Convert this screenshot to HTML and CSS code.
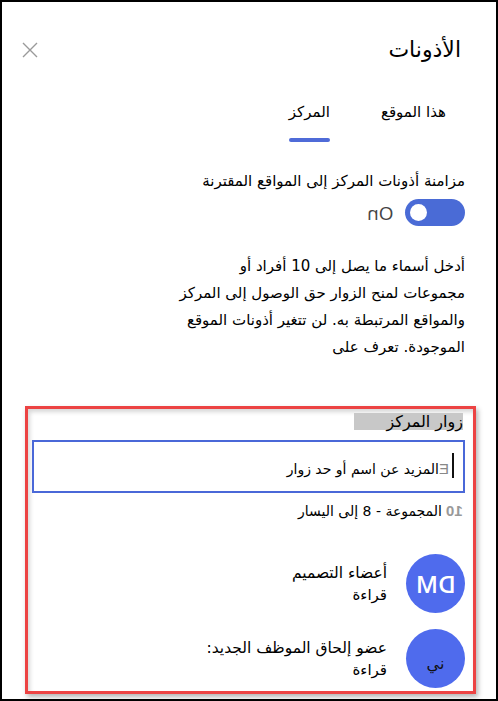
FILE: index.html
```html
<!DOCTYPE html>
<html lang="ar" dir="rtl">
<head>
<meta charset="utf-8">
<title>الأذونات</title>
<link rel="stylesheet" href="styles.css">
</head>
<body>
<div class="frame">
  <header class="head">
    <h1 class="title">الأذونات</h1>
    <button class="close" aria-label="إغلاق">
      <svg width="16" height="16" viewBox="0 0 16 16"><path d="M1 1 L15 15 M15 1 L1 15" stroke="#9a9a9a" stroke-width="1.4" fill="none"/></svg>
    </button>
  </header>
  <nav class="tabs">
    <span class="tab">هذا الموقع</span>
    <span class="tab active">المركز</span>
  </nav>
  <div class="sync">
    <div class="sync-label">مزامنة أذونات المركز إلى المواقع المقترنة</div>
    <div class="toggle-row">
      <span class="switch"><span class="knob"></span></span>
      <span class="on mirror">On</span>
    </div>
  </div>
  <p class="desc">أدخل أسماء ما يصل إلى 10 أفراد أو<br>مجموعات لمنح الزوار حق الوصول إلى المركز<br>والمواقع المرتبطة به. لن تتغير أذونات الموقع<br>الموجودة. تعرف على</p>
  <section class="visitors">
    <div class="vis-label"><span class="vis-text">زوار المركز</span></div>
    <div class="input">
      <span class="caret"></span>
      <span class="e-glyph mirror">E</span>
      <span class="ph">المزيد عن اسم أو حد زوار</span>
    </div>
    <div class="count"><span class="num mirror">10</span> المجموعة - 8 إلى اليسار</div>
    <ul class="members">
      <li class="member">
        <span class="avatar"><span class="initials mirror">DM</span></span>
        <div class="info">
          <div class="name">أعضاء التصميم</div>
          <div class="role">قراءة</div>
        </div>
      </li>
      <li class="member">
        <span class="avatar alt"><span class="initials-ar">ني</span></span>
        <div class="info">
          <div class="name">عضو إلحاق الموظف الجديد:</div>
          <div class="role">قراءة</div>
        </div>
      </li>
    </ul>
  </section>
</div>
</body>
</html>
```
FILE: styles.css
```css
* { box-sizing: border-box; }
html, body { margin: 0; padding: 0; background: #fff; }
body {
  font-family: "DejaVu Sans", "Noto Sans", sans-serif;
  color: #000;
}
.frame {
  width: 498px;
  height: 701px;
  border: 2px solid #000;
  overflow: hidden;
}
.mirror { display: inline-block; transform: scaleX(-1); }

.head {
  display: flex;
  align-items: center;
  padding: 34px 35px 0 20px;
}
.title {
  margin: 0;
  font-size: 22px;
  line-height: 28px;
  font-weight: normal;
}
.close {
  margin-right: auto;
  border: 0;
  background: none;
  padding: 0;
  width: 16px;
  height: 16px;
  display: flex;
}

.tabs {
  display: flex;
  gap: 51px;
  padding-right: 50px;
  margin-top: 36px;
}
.tab {
  position: relative;
  font-size: 15px;
  line-height: 24px;
  padding-bottom: 18px;
}
.tab.active::after {
  content: "";
  position: absolute;
  left: 0;
  right: 0;
  bottom: 0;
  height: 4px;
  border-radius: 2px;
  background: #4f6bd8;
}

.sync { padding-right: 31px; margin-top: 28px; }
.sync-label { font-size: 15px; line-height: 22px; }
.toggle-row {
  display: flex;
  align-items: center;
  gap: 12px;
  margin-top: 7px;
}
.switch {
  position: relative;
  width: 60px;
  height: 27px;
  border-radius: 14px;
  background: #4a6bd6;
}
.knob {
  position: absolute;
  left: 5px;
  top: 5px;
  width: 17px;
  height: 17px;
  border-radius: 50%;
  background: #fff;
}
.on {
  font-family: "Open Sans", "Liberation Sans", sans-serif;
  font-size: 19px;
  color: #444;
}

.desc {
  margin: 27px 31px 0 0;
  font-size: 15px;
  line-height: 27px;
}

.visitors {
  margin: 45px 20px 0 23px;
  border: 3px solid #ec4343;
  box-shadow: 2px 3px 5px rgba(0,0,0,0.3), inset 2px 3px 4px rgba(0,0,0,0.16);
  padding: 4px 8px 3px 4px;
}
.vis-label { display: flex; padding-right: 2px; }
.vis-text {
  background: #c8c8c8;
  font-size: 16px;
  line-height: 17px;
  padding-left: 32px;
}
.input {
  margin-top: 10px;
  height: 53px;
  border: 2px solid #4a68d8;
  display: flex;
  align-items: flex-end;
  padding: 0 9px 12px 0;
}
.caret {
  width: 2px;
  height: 25px;
  background: #111;
  margin-left: 3px;
  margin-bottom: 1px;
}
.e-glyph {
  font-family: "Liberation Sans", sans-serif;
  color: #888;
  font-size: 15px;
  line-height: 20px;
}
.ph { font-size: 14px; line-height: 20px; }
.count {
  margin-top: 8px;
  font-size: 14px;
  line-height: 20px;
  padding-right: 2px;
}
.num {
  color: #999;
  font-family: "Liberation Sans", sans-serif;
  font-weight: bold;
  font-size: 15px;
}
.members {
  list-style: none;
  margin: 33px 0 0;
  padding: 0;
  display: flex;
  flex-direction: column;
  gap: 16px;
}
.member {
  display: flex;
  align-items: center;
  gap: 19px;
}
.avatar {
  width: 59px;
  height: 59px;
  border-radius: 50%;
  background: #4f6bed;
  display: flex;
  align-items: center;
  justify-content: center;
  flex-shrink: 0;
}
.initials {
  font-family: "Open Sans", "Liberation Sans", sans-serif;
  color: #fff;
  font-size: 24px;
  font-weight: 600;
}
.initials-ar {
  font-size: 16px;
  color: #111;
  margin-top: 10px;
}
.name { font-size: 15.5px; line-height: 22px; }
.role { font-size: 15px; line-height: 22px; }
```
